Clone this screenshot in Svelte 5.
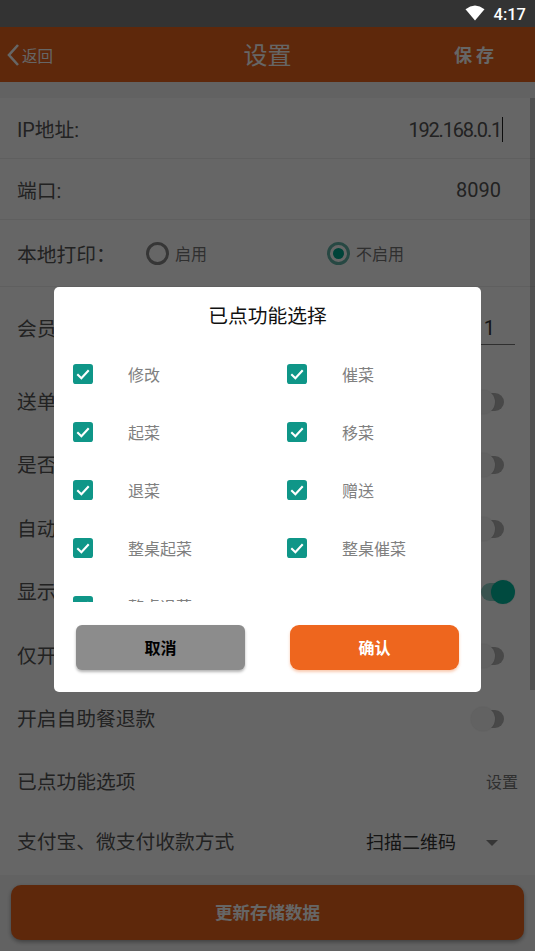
<script>
    let choices = ["修改", "催菜", "起菜", "移菜", "退菜", "赠送", "整桌起菜", "整桌催菜", "整桌退菜"];
    let toggles = [
        { label: "送单打印", on: false },
        { label: "是否启用", on: false },
        { label: "自动登录", on: false },
        { label: "显示图片", on: true },
        { label: "仅开启堂食", on: false },
        { label: "开启自助餐退款", on: false },
    ];
</script>

<div class="phone">
    <div class="statusbar">
        <svg class="wifi" width="20" height="16" viewBox="0 0 20 16">
            <path d="M0.5 4.2 Q10 -3.2 19.5 4.2 L10 15.5 Z" fill="#fff" />
        </svg>
        <span class="time">4:17</span>
    </div>

    <div class="screen">
        <header class="topbar">
            <div class="back">
                <svg width="14" height="24" viewBox="0 0 14 24">
                    <path d="M12 2 L3 12 L12 22" fill="none" stroke="#fff" stroke-width="2.6" />
                </svg>
                <span>返回</span>
            </div>
            <div class="title">设置</div>
            <div class="save">保存</div>
        </header>

        <main class="content">
            <div class="row text-row first">
                <span class="label">IP地址:</span>
                <span class="value ip">192.168.0.1<i class="caret"></i></span>
            </div>
            <div class="row text-row">
                <span class="label">端口:</span>
                <span class="value">8090</span>
            </div>
            <div class="row print-row">
                <span class="label print-label">本地打印：</span>
                <div class="radio first-radio">
                    <span class="dot"></span>
                    <span>启用</span>
                </div>
                <div class="radio checked">
                    <span class="dot"></span>
                    <span>不启用</span>
                </div>
            </div>
            <div class="row member-row">
                <span class="label">会员卡号</span>
                <span class="member-input">1</span>
            </div>
            {#each toggles as t}
                <div class="row toggle-row">
                    <span class="label">{t.label}</span>
                    <span class="switch" class:on={t.on}><b></b></span>
                </div>
            {/each}
            <div class="row link-row">
                <span class="label">已点功能选项</span>
                <span class="link">设置</span>
            </div>
            <div class="row pay-row">
                <span class="label">支付宝、微支付收款方式</span>
                <span class="select">扫描二维码</span>
                <span class="arrow"></span>
            </div>
        </main>

        <footer class="bottom">
            <div class="update"><span>更新存储数据</span></div>
        </footer>
    </div>

    <div class="scrim"></div>
    <div class="scrollbar"></div>

    <div class="dialog">
        <h2>已点功能选择</h2>
        <div class="list">
            {#each choices as c}
                <div class="choice">
                    <svg width="20" height="20" viewBox="0 0 21 21">
                        <rect width="21" height="21" rx="3" fill="#0f9688" />
                        <path d="M4.5 10.8 L8.8 15 L16.5 6.6" fill="none" stroke="#fff" stroke-width="2.2" />
                    </svg>
                    <span>{c}</span>
                </div>
            {/each}
        </div>
        <div class="actions">
            <div class="btn cancel"><span>取消</span></div>
            <div class="btn confirm"><span>确认</span></div>
        </div>
    </div>
</div>

<style>
    :global(body) {
        margin: 0;
        background: #666;
    }
    .phone {
        position: relative;
        width: 535px;
        height: 951px;
        overflow: hidden;
        font-family: Roboto, "Noto Sans CJK SC", sans-serif;
    }
    .statusbar {
        height: 27px;
        background: #333;
        display: flex;
        align-items: center;
        justify-content: flex-end;
        gap: 9px;
        padding-right: 9px;
        box-sizing: border-box;
    }
    .wifi {
        margin-top: -1px;
    }
    .time {
        color: #fff;
        font-size: 16.5px;
        font-weight: 500;
        margin-top: 1px;
    }
    .screen {
        height: 924px;
        display: flex;
        flex-direction: column;
        background: #f5f5f5;
    }
    .topbar {
        height: 55px;
        flex: none;
        background: #eb641c;
        display: grid;
        grid-template-columns: 1fr auto 1fr;
        align-items: center;
        color: #fff;
    }
    .back {
        display: flex;
        align-items: center;
        gap: 2px;
        padding-left: 6px;
        font-size: 15.5px;
    }
    .title {
        font-size: 24px;
        margin-top: -2px;
    }
    .save {
        justify-self: end;
        margin-right: 37px;
        margin-top: -2px;
        font-size: 18px;
        font-weight: 700;
        letter-spacing: 4px;
    }
    .content {
        margin-top: 16px;
        flex: 1;
        background: #fff;
        display: flex;
        flex-direction: column;
        overflow: hidden;
    }
    .row {
        display: flex;
        align-items: center;
        padding: 0 17px;
        flex: none;
        box-sizing: border-box;
    }
    .label {
        font-size: 19.75px;
        color: #555;
        white-space: nowrap;
        margin-top: -3px;
    }
    .text-row {
        height: 61px;
        justify-content: space-between;
        border-bottom: 1px solid #eee;
        padding-right: 34px;
    }
    .text-row .label,
    .print-row .label {
        margin-top: 0;
    }
    .value {
        position: relative;
        font-size: 20px;
        color: #555;
        margin-top: 1px;
    }
    .ip {
        letter-spacing: -1.2px;
        margin-top: 4px;
    }
    .caret {
        position: absolute;
        right: -2px;
        top: -1px;
        width: 1px;
        height: 25px;
        background: #222;
    }
    .print-row {
        height: 67px;
        border-bottom: 1px solid #eee;
    }
    .print-label {
        width: 129px;
    }
    .radio {
        width: 185px;
        display: flex;
        align-items: center;
        gap: 6px;
        font-size: 16px;
        color: #777;
    }
    .radio span:last-child {
        margin-top: -1px;
    }
    .first-radio {
        width: 181px;
    }
    .dot {
        width: 23px;
        height: 23px;
        box-sizing: border-box;
        border: 3px solid #888;
        border-radius: 50%;
        display: grid;
        place-items: center;
    }
    .checked .dot {
        border-color: #62b3a8;
    }
    .checked .dot::after {
        content: "";
        width: 11px;
        height: 11px;
        border-radius: 50%;
        background: #00a78f;
    }
    .member-row {
        height: 83px;
        justify-content: space-between;
        padding-right: 20px;
    }
    .member-input {
        width: 100px;
        height: 33px;
        line-height: 33px;
        box-sizing: border-box;
        border-bottom: 1.5px solid #777;
        font-size: 20px;
        color: #333;
        text-align: right;
        padding-right: 20px;
        margin-top: -1px;
    }
    .toggle-row {
        height: 63.5px;
        justify-content: space-between;
        padding-right: 20px;
    }
    .toggle-row:last-of-type .label,
    .link-row .label {
        margin-top: -4px;
    }
    .switch {
        position: relative;
        width: 44px;
        height: 24px;
        display: block;
    }
    .switch::before {
        content: "";
        position: absolute;
        left: 8px;
        right: 11px;
        top: 3px;
        height: 18px;
        border-radius: 9px;
        background: #b4b4b4;
    }
    .switch b {
        position: absolute;
        left: 0;
        top: 0;
        width: 24px;
        height: 24px;
        border-radius: 50%;
        background: #f4f4f4;
        box-shadow: 0 0 2px rgba(0, 0, 0, 0.12);
    }
    .switch.on::before {
        left: 10px;
        right: 8px;
        background: #8fd0c6;
    }
    .switch.on b {
        left: auto;
        right: 0;
        background: #00b89f;
    }
    .link-row {
        height: 63px;
        justify-content: space-between;
    }
    .link {
        font-size: 16px;
        color: #777;
        margin-top: -3px;
    }
    .pay-row {
        height: 58px;
    }
    .pay-row .label {
        flex: 1;
        margin-top: -5px;
    }
    .select {
        font-size: 18px;
        color: #333;
        margin-right: 30px;
        margin-top: -5px;
    }
    .arrow {
        width: 0;
        height: 0;
        border-left: 6px solid transparent;
        border-right: 6px solid transparent;
        border-top: 6px solid #888;
        margin-right: 20px;
    }
    .bottom {
        height: 76px;
        flex: none;
        box-sizing: border-box;
        padding: 10px 11px 11px;
        background: #f5f5f5;
    }
    .update {
        height: 55px;
        border-radius: 10px;
        background: #eb641c;
        color: #fff;
        font-size: 17.5px;
        font-weight: 700;
        display: grid;
        place-items: center;
        box-shadow: 0 2px 4px rgba(0, 0, 0, 0.35);
    }
    .update span {
        margin-top: -3px;
    }
    .scrim {
        position: absolute;
        inset: 27px 0 0 0;
        background: rgba(0, 0, 0, 0.6);
    }
    .scrollbar {
        position: absolute;
        top: 98px;
        right: 0;
        width: 5px;
        height: 592px;
        background: rgba(0, 0, 0, 0.2);
    }
    .dialog {
        position: absolute;
        left: 54px;
        top: 287px;
        width: 427px;
        height: 405px;
        background: #fff;
        border-radius: 5px;
        display: flex;
        flex-direction: column;
    }
    h2 {
        margin: 0;
        height: 58px;
        line-height: 60px;
        text-align: center;
        font-size: 19.75px;
        font-weight: 400;
        color: #111;
    }
    .list {
        height: 257px;
        overflow: hidden;
        display: grid;
        grid-template-columns: 214px 1fr;
        grid-auto-rows: 58px;
        padding-left: 19px;
    }
    .choice {
        display: flex;
        align-items: center;
        gap: 35px;
        font-size: 16px;
        color: #808080;
    }
    .actions {
        display: flex;
        justify-content: space-between;
        padding: 23px 22px 0;
    }
    .btn {
        width: 169px;
        height: 45px;
        border-radius: 6px;
        display: grid;
        place-items: center;
        font-size: 16px;
        font-weight: 700;
    }
    .btn span {
        margin-top: -2px;
    }
    .cancel {
        background: #8c8c8c;
        color: #000;
        box-shadow: 0 2px 3px rgba(0, 0, 0, 0.3);
    }
    .confirm {
        background: #ee661e;
        color: #fff;
        border-radius: 9px;
        box-shadow: 0 2px 3px rgba(238, 102, 30, 0.35);
    }
</style>
